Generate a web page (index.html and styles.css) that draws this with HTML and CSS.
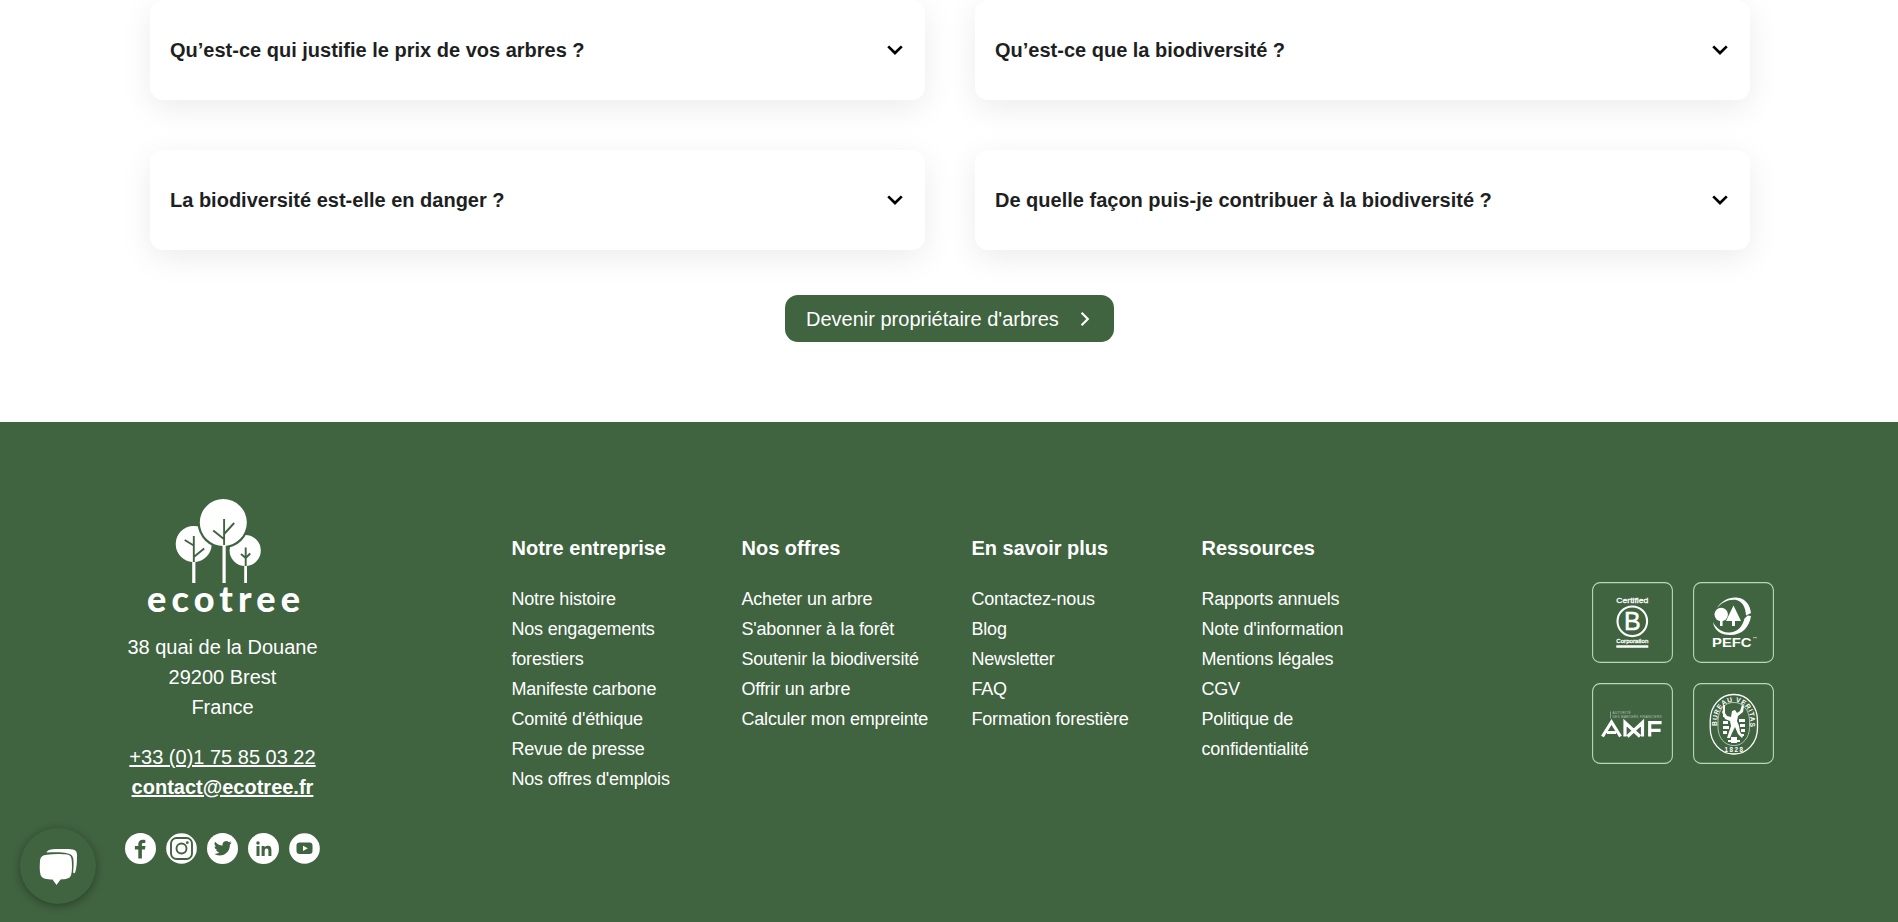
FILE: index.html
```html
<!DOCTYPE html>
<html lang="fr">
<head>
<meta charset="utf-8">
<title>EcoTree</title>
<link rel="stylesheet" href="styles.css">
</head>
<body>
<main class="faq">
  <div class="faq-grid">
    <div class="card"><h3>Qu’est-ce qui justifie le prix de vos arbres ?</h3><svg class="chev" viewBox="0 0 16 10"><path d="M1.200 1.400 8 8l6.800-6.600"/></svg></div>
    <div class="card"><h3>Qu’est-ce que la biodiversité ?</h3><svg class="chev" viewBox="0 0 16 10"><path d="M1.200 1.400 8 8l6.800-6.600"/></svg></div>
    <div class="card"><h3>La biodiversité est-elle en danger ?</h3><svg class="chev" viewBox="0 0 16 10"><path d="M1.200 1.400 8 8l6.800-6.600"/></svg></div>
    <div class="card"><h3>De quelle façon puis-je contribuer à la biodiversité ?</h3><svg class="chev" viewBox="0 0 16 10"><path d="M1.200 1.400 8 8l6.800-6.600"/></svg></div>
  </div>
  <a class="cta"><span>Devenir propriétaire d'arbres</span><svg class="cta-arrow" viewBox="0 0 10 16"><path d="M1.600 1.700 7.800 8l-6.200 6.300"/></svg></a>
</main>
<footer class="footer">
  <section class="brand">
    <svg class="logo" viewBox="0 0 156 120">
      <g transform="translate(-.8 -1)">
        <g fill="#fff">
          <circle cx="49.500" cy="45" r="18"/>
          <circle cx="101" cy="51.500" r="15.600"/>
          <circle cx="79.100" cy="23.500" r="25.700" fill="#406340"/>
          <circle cx="79.100" cy="23.500" r="23.500"/>
          <path d="M48 62h3.200v22H48zM78.300 46h3.200v38h-3.200zM100 66h2.800v18H100z"/>
        </g>
        <g fill="none" stroke="#406340" stroke-width="1.900">
          <path d="M49.600 37v26M40.500 41l9 5.500M60 49.500 49.600 58M79.900 20v26M69 31.500l10.700 8.500M90 24 79.900 35M101.500 48.500V67M96.800 55l4.700 4M106 54.500l-4.500 4.500"/>
        </g>
      </g>
      <text x="2" y="112.300" textLength="153">ecotree</text>
    </svg>
    <address>38 quai de la Douane<br>29200 Brest<br>France</address>
    <p class="contact"><a>+33 (0)1 75 85 03 22</a><br><a class="mail">contact@ecotree.fr</a></p>
    <div class="social">
      <svg viewBox="0 0 31 31"><circle class="w" cx="15.500" cy="15.500" r="15.500"/><path class="g" d="M13.300 25.500v-9h-3.400v-3.600h3.400v-1.600c0-3 1.700-4.600 4.400-4.600 1 0 1.900.1 2.600.2v3.100h-1.700c-1.300 0-1.700.7-1.700 1.600v1.300h3.600l-.6 3.600h-3v9z"/></svg>
      <svg viewBox="0 0 31 31"><circle class="w" cx="15.500" cy="15.500" r="15.300"/><g fill="none" stroke="#406340" stroke-width="1.900"><rect x="5" y="5" width="21" height="21" rx="5.500"/><circle cx="15.500" cy="15.500" r="5"/></g><circle class="g" cx="21.300" cy="9.700" r="1.400"/></svg>
      <svg viewBox="0 0 31 31"><circle class="w" cx="15.500" cy="15.500" r="15.500"/><path class="g" transform="translate(6.900 6.400) scale(.74)" d="M23.950 4.570a10 10 0 0 1-2.820.77 4.960 4.960 0 0 0 2.160-2.720c-.95.550-2 .95-3.130 1.180a4.920 4.920 0 0 0-8.380 4.480C7.690 8.090 4.070 6.130 1.640 3.160a4.920 4.920 0 0 0 1.520 6.570 4.900 4.900 0 0 1-2.230-.61v.06a4.920 4.920 0 0 0 3.950 4.830 5 5 0 0 1-2.210.08 4.940 4.940 0 0 0 4.600 3.420A9.870 9.870 0 0 1 0 19.540a13.990 13.990 0 0 0 7.550 2.210c9.050 0 14-7.500 14-13.980 0-.21 0-.42-.02-.63a9.940 9.940 0 0 0 2.460-2.550z"/></svg>
      <svg viewBox="0 0 31 31"><circle class="w" cx="15.500" cy="15.500" r="15.500"/><path class="g" d="M8.500 13h3v10h-3zM10 8.300a1.750 1.750 0 1 1 0 3.500 1.750 1.750 0 0 1 0-3.500zM13.600 13h2.900v1.400c.5-.9 1.600-1.700 3.200-1.700 3.200 0 3.700 2.100 3.700 4.800V23h-3v-4.900c0-1.200 0-2.700-1.700-2.700s-2 1.300-2 2.600v5h-3.100z"/></svg>
      <svg viewBox="0 0 31 31"><circle class="w" cx="15.500" cy="15.500" r="15.300"/><rect class="g" x="7.500" y="9.500" width="16" height="11.600" rx="3"/><path class="w" d="m14 12.700 4.800 2.600-4.800 2.600z"/></svg>
    </div>
  </section>
  <nav class="links">
    <div><h4>Notre entreprise</h4><a>Notre histoire</a><a>Nos engagements forestiers</a><a>Manifeste carbone</a><a>Comité d'éthique</a><a>Revue de presse</a><a>Nos offres d'emplois</a></div>
    <div><h4>Nos offres</h4><a>Acheter un arbre</a><a>S'abonner à la forêt</a><a>Soutenir la biodiversité</a><a>Offrir un arbre</a><a>Calculer mon empreinte</a></div>
    <div><h4>En savoir plus</h4><a>Contactez-nous</a><a>Blog</a><a>Newsletter</a><a>FAQ</a><a>Formation forestière</a></div>
    <div><h4>Ressources</h4><a>Rapports annuels</a><a>Note d'information</a><a>Mentions légales</a><a>CGV</a><a>Politique de confidentialité</a></div>
  </nav>
  <section class="badges">
    <svg viewBox="0 0 81 81"><rect class="frame" x=".6" y=".6" width="79.800" height="79.800" rx="7.500"/>
      <text x="24.300" y="21" font-size="8" stroke="#fff" stroke-width=".3" textLength="32" lengthAdjust="spacingAndGlyphs">Certified</text>
      <circle class="line" cx="40.300" cy="39.300" r="14.800" stroke-width="2.100"/>
      <text x="32" y="47.800" font-size="25" stroke="#fff" stroke-width=".5" textLength="17">B</text>
      <text x="24.300" y="61.200" font-size="6.200" stroke="#fff" stroke-width=".3" textLength="32" lengthAdjust="spacingAndGlyphs">Corporation</text>
      <path class="w" d="M24.300 63.300h32v2.500h-32z"/>
    </svg>
    <svg viewBox="0 0 81 81"><rect class="frame" x=".6" y=".6" width="79.800" height="79.800" rx="7.500"/>
      <path class="w" d="M24 26c5-8 13-11.500 21-10.300 7 1 12 6.500 13 15.300l-5 2.500C52.500 25 49 19 42.500 17.800 36 17 29 20 24 26z"/>
      <path class="w" d="M20 40c1 8.500 8 13 17.500 13C49 53 56.500 45 58 34l-3.300-.5-3.200 3C49 46 43 51 35 50.500 28 50 23 46 20 40z"/>
      <circle class="w" cx="28.200" cy="32.500" r="6.700"/><path class="w" d="M27 38h2.600v6H27zM40.500 23.500 33 39h6v5h3v-5h6z"/>
      <text x="19" y="65" font-size="12.300" font-weight="700" textLength="39.500" lengthAdjust="spacingAndGlyphs">PEFC</text><path class="w" d="M60 55.500h4v.6h-4z"/>
    </svg>
    <svg viewBox="0 0 81 81"><rect class="frame" x=".6" y=".6" width="79.800" height="79.800" rx="7.500"/>
      <path class="line" d="M18.500 28.500v7" stroke-width=".4"/><text x="20.500" y="31" font-size="3" opacity=".6" textLength="18">AUTORITÉ</text><text x="20.500" y="34.500" font-size="3" opacity=".6" textLength="49">DES MARCHÉS FINANCIERS</text>
      <path class="line" stroke-width="3.200" d="M10.500 53.500 19.500 39l9 14.500M15 49.500h9M33 53.500V39.500L48 53.500M35.500 53.500 50.500 39.500v14M57.700 53.500V39.700H69.600M57.700 47.300H68.600"/>
    </svg>
    <svg viewBox="0 0 81 81"><rect class="frame" x=".6" y=".6" width="79.800" height="79.800" rx="7.500"/>
      <rect class="line" x="17.200" y="11.500" width="47.300" height="59.500" rx="23" ry="26" stroke-width="1.300"/>
      <rect class="line" x="25" y="19.500" width="31.500" height="43" rx="15" ry="18" stroke-width=".6"/>
      <defs><path id="arc" d="M24.400 43V38C24.400 12.500 57.200 12.500 57.200 38v5"/></defs>
      <text font-size="6.800" font-weight="700"><textPath href="#arc" textLength="67">BUREAU VERITAS</textPath></text>
      <text x="31.500" y="69" font-size="6.300" font-weight="700" textLength="18.500">1828</text>
      <path class="w" d="m39 28 3-1 2 3 3-2 2-6 2 1-1 6-5 4-1 5 2 5 1 6 3 4-1 2-4-4-3-7-3 6-2 5h-3l2-6 2-6-1-5-5-2-3-7 1-2 4 6 4 1zM30 22h2v12h-2zM30 38h5v3h-5zM30 43h6v3h-6zM30 48h4v3h-4zM46 36h6v3h-6zM47 41h5v3h-5zM48 46h4v3h-4zM47 51h4v2h-4zM35 57h12v2H35zM38 54h6v6h-6z"/>
    </svg>
  </section>
</footer>
<div class="chat"><svg viewBox="0 0 40 38"><path class="w" d="M7.500 4.500C9 .8 14 1 26 1c9 0 12 .5 12 6 0 7-.3 13-1.800 17.300-.6 1.500-2 1.200-2-.3.500-8 1-13-1.200-16.200C31 4.500 22 3.500 7.500 4.500z"/><path class="w" d="M8 6.800c7-1 15-.8 20-.2 4 .5 4.700 3 4.900 8 .2 6 .1 10-1 13-1 3.300-5 3.600-10.400 3.900L17.500 37l-4-5.500c-6-.2-10.700-.6-11.900-4.500C.5 23 .6 18 1 13c.4-4.500 2.500-5.600 7-6.200z"/></svg></div>
</body>
</html>
```
FILE: styles.css
```css
* { box-sizing: border-box; }
body { margin: 0; height: 922px; overflow: hidden; background: #fff; font-family: "Liberation Sans", Arial, sans-serif; font-size: 20px; color: #1e1f22; }
h3, h4, p { margin: 0; }
.faq { height: 422px; display: flex; flex-direction: column; align-items: center; padding-left: 2px; }
.faq-grid { display: grid; grid-template-columns: 775px 775px; grid-auto-rows: 100px; gap: 50px; }
.card { display: flex; align-items: center; justify-content: space-between; padding: 0 22px 0 20px; border-radius: 13px; background: #fff; box-shadow: 0 8px 32px rgba(0, 0, 0, .08); }
.card h3 { font-size: 20px; line-height: 30px; font-weight: 700; }
.chev { width: 16px; height: 10px; fill: none; stroke: #000; stroke-width: 2.7; }
.cta { margin: 45px 1px 0 0; width: 329px; height: 47px; border-radius: 13px; background: #406340; color: #fff; display: flex; align-items: center; padding-left: 21px; }
.cta span { padding-top: 2px; }
.cta-arrow { width: 10px; height: 16px; margin-left: 21px; fill: none; stroke: #fff; stroke-width: 2.2; }
.footer { height: 500px; background: #406340; color: #fff; display: flex; }
.brand { width: 445px; padding-top: 78px; display: flex; flex-direction: column; align-items: center; line-height: 30px; text-align: center; }
.logo { width: 156px; height: 120px; overflow: visible; fill: #fff; }
.logo text { font-family: Lato, sans-serif; font-size: 36px; font-weight: 900; }
address { font-style: normal; margin-top: 12px; }
.contact { margin-top: 20px; }
.contact a { text-decoration: underline; }
.mail { font-weight: 700; }
.social { display: flex; gap: 10.2px; margin-top: 31px; }
.social svg { width: 31px; height: 31px; }
.w { fill: #fff; }
.g { fill: #406340; }
.links { display: grid; grid-template-columns: repeat(4, 230px); padding: 111px 0 0 66.5px; }
.links div { padding-right: 30px; }
.links h4 { font-size: 20px; line-height: 30px; margin-bottom: 21px; white-space: nowrap; }
.links a { display: block; font-size: 18px; line-height: 30px; letter-spacing: -.2px; }
.badges { display: grid; grid-template-columns: 81px 81px; grid-auto-rows: 81px; gap: 20px; padding: 160px 0 0 160.5px; }
.badges svg { width: 81px; height: 81px; fill: #fff; }
.badges .frame { fill: none; stroke: #b5dbb5; stroke-width: 1.1; }
.badges .line { fill: none; stroke: #fff; }
.chat { position: absolute; left: 20px; top: 828px; width: 76px; height: 76px; border-radius: 50%; background: #406340; box-shadow: 0 2px 8px rgba(0, 0, 0, .35); display: flex; align-items: center; justify-content: center; padding: 1px 0 0 1px; }
.chat svg { width: 40px; height: 38px; }
```
